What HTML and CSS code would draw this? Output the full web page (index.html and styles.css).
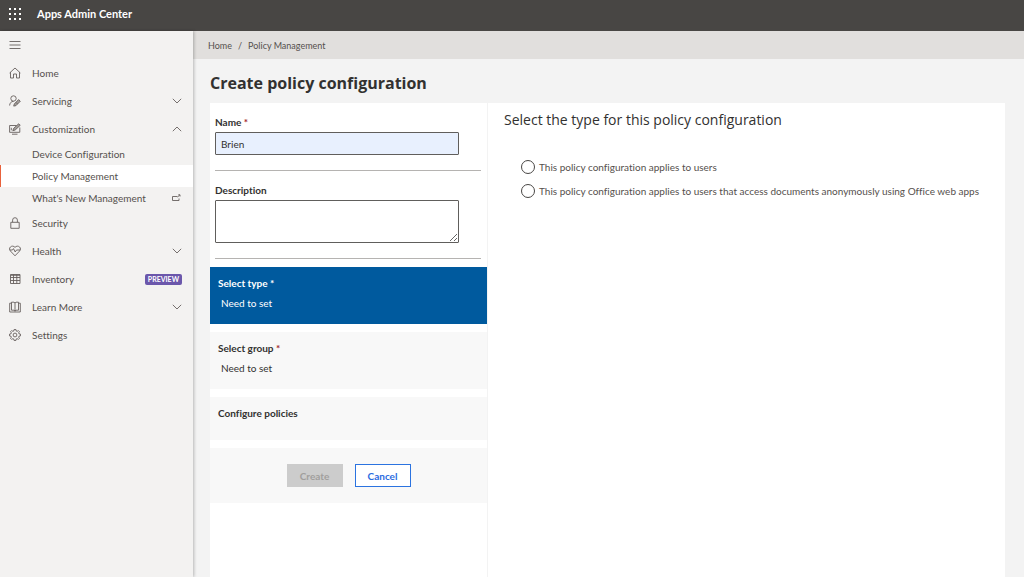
FILE: index.html
```html
<!DOCTYPE html>
<html lang="en">
<head>
    <meta charset="UTF-8">
    <meta name="viewport" content="width=device-width, initial-scale=1.0">
    <title>Apps Admin Center - Policy Management</title>
    <link rel="stylesheet" href="styles.css">
</head>
<body>
    <header class="topbar">
        <button class="icon-button" type="button" aria-label="App launcher">
            <svg class="waffle" viewBox="0 0 12 12"><path d="M0 0h2v2H0zM5 0h2v2H5zM10 0h2v2h-2zM0 5h2v2H0zM5 5h2v2H5zM10 5h2v2h-2zM0 10h2v2H0zM5 10h2v2H5zM10 10h2v2h-2z"/></svg>
        </button>
        <span class="app-name">Apps Admin Center</span>
    </header>

    <div class="layout">
        <nav class="sidebar">
            <button class="icon-button menu-toggle" type="button" aria-label="Collapse menu">
                <svg class="icon" viewBox="0 0 12 12"><path d="M.5 2.5h11M.5 6h11M.5 9.5h11"/></svg>
            </button>
            <ul class="menu">
                <li><a class="item" href="#">
                    <svg class="icon" viewBox="0 0 12 12"><path d="M1.500 5.200V11h3V7h3v4h3V5.200M.6 6 6 1l5.400 5"/></svg>
                    <span>Home</span>
                </a></li>
                <li><a class="item" href="#">
                    <svg class="icon" viewBox="0 0 12 12"><circle cx="4.500" cy="3.500" r="2.700"/><path d="M.6 10.500C.8 8 2 6.600 4.500 6.300"/><path class="solid" d="M5.300 9 9.600 4.600l1.700 1.600L7 10.600l-2.300.5zM7 7.400l1.600 1.600"/></svg>
                    <span>Servicing</span>
                    <svg class="chevron" viewBox="0 0 10 6"><path d="m.8.8 4.200 4.200L9.200.8"/></svg>
                </a></li>
                <li><a class="item" href="#">
                    <svg class="icon" viewBox="0 0 12 12"><path d="M7.500 2.500H.6v6.800h10.200V4.500M3 11.200h5.500M2.300 4.800v2.500"/><path class="solid" d="m3.800 7.700.8-2.300L9.700.8l1.500 1.500L6.200 7z"/></svg>
                    <span>Customization</span>
                    <svg class="chevron" viewBox="0 0 10 6"><path d="M.8 5.200 5 1l4.200 4.200"/></svg>
                </a>
                    <ul class="submenu">
                        <li><a class="subitem" href="#">Device Configuration</a></li>
                        <li><a class="subitem active" href="#" aria-current="page">Policy Management</a></li>
                        <li><a class="subitem" href="#">
                            <span>What's New Management</span>
                            <svg class="external" viewBox="0 0 10 8"><path d="M6.500 2.500h-5v4h6.500V4.500M6.500 3 8.800 1M7.300.8H9v1.700"/></svg>
                        </a></li>
                    </ul>
                </li>
                <li><a class="item" href="#">
                    <svg class="icon" viewBox="0 0 12 12"><path d="M1.800 5.300h8.400v6H1.800zM3.600 5.200V3.100a2.400 2.400 0 0 1 4.800 0v2.100"/></svg>
                    <span>Security</span>
                </a></li>
                <li><a class="item" href="#">
                    <svg class="icon" viewBox="0 0 12 12"><path d="M6 2.400C4.800.8 2.600.8 1.400 2 .2 3.200.3 4.800 1.400 6L6 10.800 10.600 6c1.100-1.200 1.200-2.800 0-4C9.400.8 7.200.8 6 2.400zM1 5h2.500l1-1.400L6.200 7l1.300-2H11"/></svg>
                    <span>Health</span>
                    <svg class="chevron" viewBox="0 0 10 6"><path d="m.8.8 4.200 4.200L9.200.8"/></svg>
                </a></li>
                <li><a class="item" href="#">
                    <svg class="icon" viewBox="0 0 12 12"><path d="M1.500 1.500h9.500v9H1.500zM1.500 2.300H11M1.500 4.500H11M1.500 7.500H11M4.500 1.500v9M7.800 1.500v9"/></svg>
                    <span>Inventory</span>
                    <span class="badge">PREVIEW</span>
                </a></li>
                <li><a class="item" href="#">
                    <svg class="icon" viewBox="0 0 12 12"><path d="M2.500 1.200H5L6 2l1-.8h2.500v8H7l-1 .8-1-.8H2.500zM6 2v8.500M2.500 2.200H.7v8.800h10.600V2.200H9.500"/></svg>
                    <span>Learn More</span>
                    <svg class="chevron" viewBox="0 0 10 6"><path d="m.8.8 4.200 4.200L9.200.8"/></svg>
                </a></li>
                <li><a class="item" href="#">
                    <svg class="icon" viewBox="0 0 12 12"><path d="m5 .6-.3 1.500-.8.300-1.300-.8-1 1 .8 1.300-.3.800L.6 5v2l1.500.3.3.8-.8 1.300 1 1 1.300-.8.8.3.3 1.500h2l.3-1.500.8-.3 1.300.8 1-1-.8-1.300.3-.8 1.500-.3V5l-1.500-.3-.3-.8.8-1.300-1-1-1.300.8-.8-.3L7 .6z"/><circle cx="6" cy="6" r="1.900"/></svg>
                    <span>Settings</span>
                </a></li>
            </ul>
        </nav>

        <main class="main">
            <nav class="breadcrumb" aria-label="Breadcrumb">
                <a href="#">Home</a>
                <span>/</span>
                <a href="#">Policy Management</a>
            </nav>

            <h1 class="title">Create policy configuration</h1>

            <form class="panel">
                <div class="steps">
                    <div class="field">
                        <label for="name">Name <span class="required">*</span></label>
                        <input class="textbox" id="name" type="text" value="Brien" required>
                    </div>
                    <div class="field">
                        <label for="description">Description</label>
                        <textarea class="textbox textarea" id="description"></textarea>
                    </div>

                    <section class="step selected">
                        <h2>Select type <span class="required">*</span></h2>
                        <p>Need to set</p>
                    </section>
                    <section class="step">
                        <h2>Select group <span class="required">*</span></h2>
                        <p>Need to set</p>
                    </section>
                    <section class="step short">
                        <h2>Configure policies</h2>
                    </section>

                    <div class="actions">
                        <button class="btn" type="submit" disabled>Create</button>
                        <button class="btn cancel" type="button">Cancel</button>
                    </div>
                </div>

                <fieldset class="details">
                    <legend>Select the type for this policy configuration</legend>
                    <div class="option">
                        <input type="radio" name="type" id="type-users">
                        <label for="type-users">This policy configuration applies to users</label>
                    </div>
                    <div class="option">
                        <input type="radio" name="type" id="type-anonymous">
                        <label for="type-anonymous">This policy configuration applies to users that access documents anonymously using Office web apps</label>
                    </div>
                </fieldset>
            </form>
        </main>
    </div>
</body>
</html>
```
FILE: styles.css
```css
* {
    box-sizing: border-box;
}

body {
    display: flex;
    flex-direction: column;
    min-height: 100vh;
    margin: 0;
    background-color: #f3f3f3;
    color: #323130;
    font-family: Lato, "Open Sans", sans-serif;
    font-size: 10px;
    font-variant-ligatures: none;
    line-height: 14px;
}

h1, h2, p, ul {
    margin: 0;
    padding: 0;
}

ul {
    list-style: none;
}

a {
    color: inherit;
    text-decoration: none;
}

svg {
    display: block;
    flex: none;
    fill: none;
    stroke: #66605d;
    stroke-width: 0.9;
}

input, textarea, button {
    font: inherit;
}

.topbar {
    display: flex;
    align-items: center;
    gap: 16px;
    height: 31px;
    padding: 0 9px 4px;
    background-color: #484644;
    color: #fff;
}

.app-name {
    font-size: 11px;
    font-weight: 700;
}

.icon-button {
    padding: 0;
    border: none;
    background: none;
    cursor: pointer;
}

.waffle {
    width: 12px;
    height: 12px;
    fill: #fff;
    stroke: none;
}

.layout {
    display: flex;
    flex: 1;
}

/* Sidebar */
.sidebar {
    flex: none;
    width: 193px;
    background-color: #f3f2f1;
    color: #55504d;
    box-shadow: 1px 0 3px rgba(0, 0, 0, 0.25);
    z-index: 1;
}

.menu-toggle {
    display: flex;
    align-items: center;
    height: 28px;
    padding: 0 9px;
}

.icon {
    width: 12px;
    height: 12px;
}

.icon .solid {
    fill: #a5a09d;
}

.item {
    display: flex;
    align-items: center;
    gap: 11px;
    height: 28px;
    padding: 0 11px 0 9px;
}

.chevron {
    width: 10px;
    height: 6px;
    margin-left: auto;
}

.badge {
    margin-left: auto;
    padding: 0 3px;
    border-radius: 2px;
    background-color: #6b57ab;
    color: #fff;
    font-size: 7px;
    font-weight: 700;
    line-height: 11px;
}

.subitem {
    display: flex;
    align-items: center;
    justify-content: space-between;
    height: 22px;
    padding: 0 12px 0 32px;
}

.subitem.active {
    background-color: #fff;
    box-shadow: inset 1px 0 #e8623c;
}

.external {
    width: 10px;
    height: 8px;
}

/* Main content */
.main {
    display: flex;
    flex: 1;
    flex-direction: column;
    min-width: 0;
}

.breadcrumb {
    display: flex;
    align-items: center;
    gap: 6px;
    height: 28px;
    padding: 2px 15px 0;
    background-color: #e1dfdd;
    color: #55504d;
    font-size: 9px;
}

.title {
    padding: 12px 17px 8px;
    font-family: "Open Sans", sans-serif;
    font-size: 16px;
    font-weight: 700;
    line-height: 24px;
}

.panel {
    display: flex;
    flex: 1;
    margin: 0 19px 0 17px;
    background-color: #fff;
}

.steps {
    display: flex;
    flex: none;
    flex-direction: column;
    width: 278px;
    border-right: 1px solid #f3f3f3;
}

.field {
    display: flex;
    flex-direction: column;
    gap: 3px;
    margin: 0 6px 0 5px;
    padding: 12px 0 15px;
    border-bottom: 1px solid #b5b3b1;
}

.field label {
    font-weight: 700;
}

.required {
    color: #a4262c;
}

.textbox {
    width: 244px;
    height: 23px;
    padding: 0 5px;
    border: 1px solid #605e5c;
    border-radius: 1px;
    background-color: #e8f0fe;
    color: #323130;
}

.textarea {
    height: 43px;
    background-color: #fff;
}

.step {
    min-height: 57px;
    margin-bottom: 8px;
    padding: 9px 8px 8px;
    background-color: #f8f8f8;
}

.step h2 {
    font-size: 10px;
    font-weight: 700;
}

.step p {
    padding: 6px 3px;
}

.step.short {
    min-height: 43px;
}

.step.selected {
    margin-top: 8px;
    background-color: #005a9e;
    color: #fff;
}

.selected .required {
    color: #fff;
}

.actions {
    display: flex;
    justify-content: center;
    gap: 12px;
    padding: 16px;
    background-color: #f8f8f8;
}

.btn {
    width: 56px;
    height: 23px;
    padding: 0;
    border: 1px solid #cccccc;
    background-color: #cccccc;
    color: #a19f9d;
    font-weight: 700;
}

.btn.cancel {
    border-color: #2b73e0;
    background-color: #fff;
    color: #2b6cdf;
    cursor: pointer;
}

.details {
    flex: 1;
    min-width: 0;
    margin: 0;
    padding: 7px 16px;
    border: none;
}

.details legend {
    float: left;
    width: 100%;
    margin-bottom: 25px;
    padding: 0;
    font-family: "Open Sans", sans-serif;
    font-size: 14px;
    font-weight: 500;
    line-height: 20px;
}

.option {
    display: flex;
    clear: both;
    align-items: center;
    gap: 4px;
    height: 24px;
    padding-left: 17px;
    color: #55504d;
}

.option input {
    flex: none;
    width: 14px;
    height: 14px;
    margin: 0;
    border: 1px solid #484644;
    border-radius: 50%;
    appearance: none;
}

.option input:checked {
    border: 4px solid #005a9e;
}
```
